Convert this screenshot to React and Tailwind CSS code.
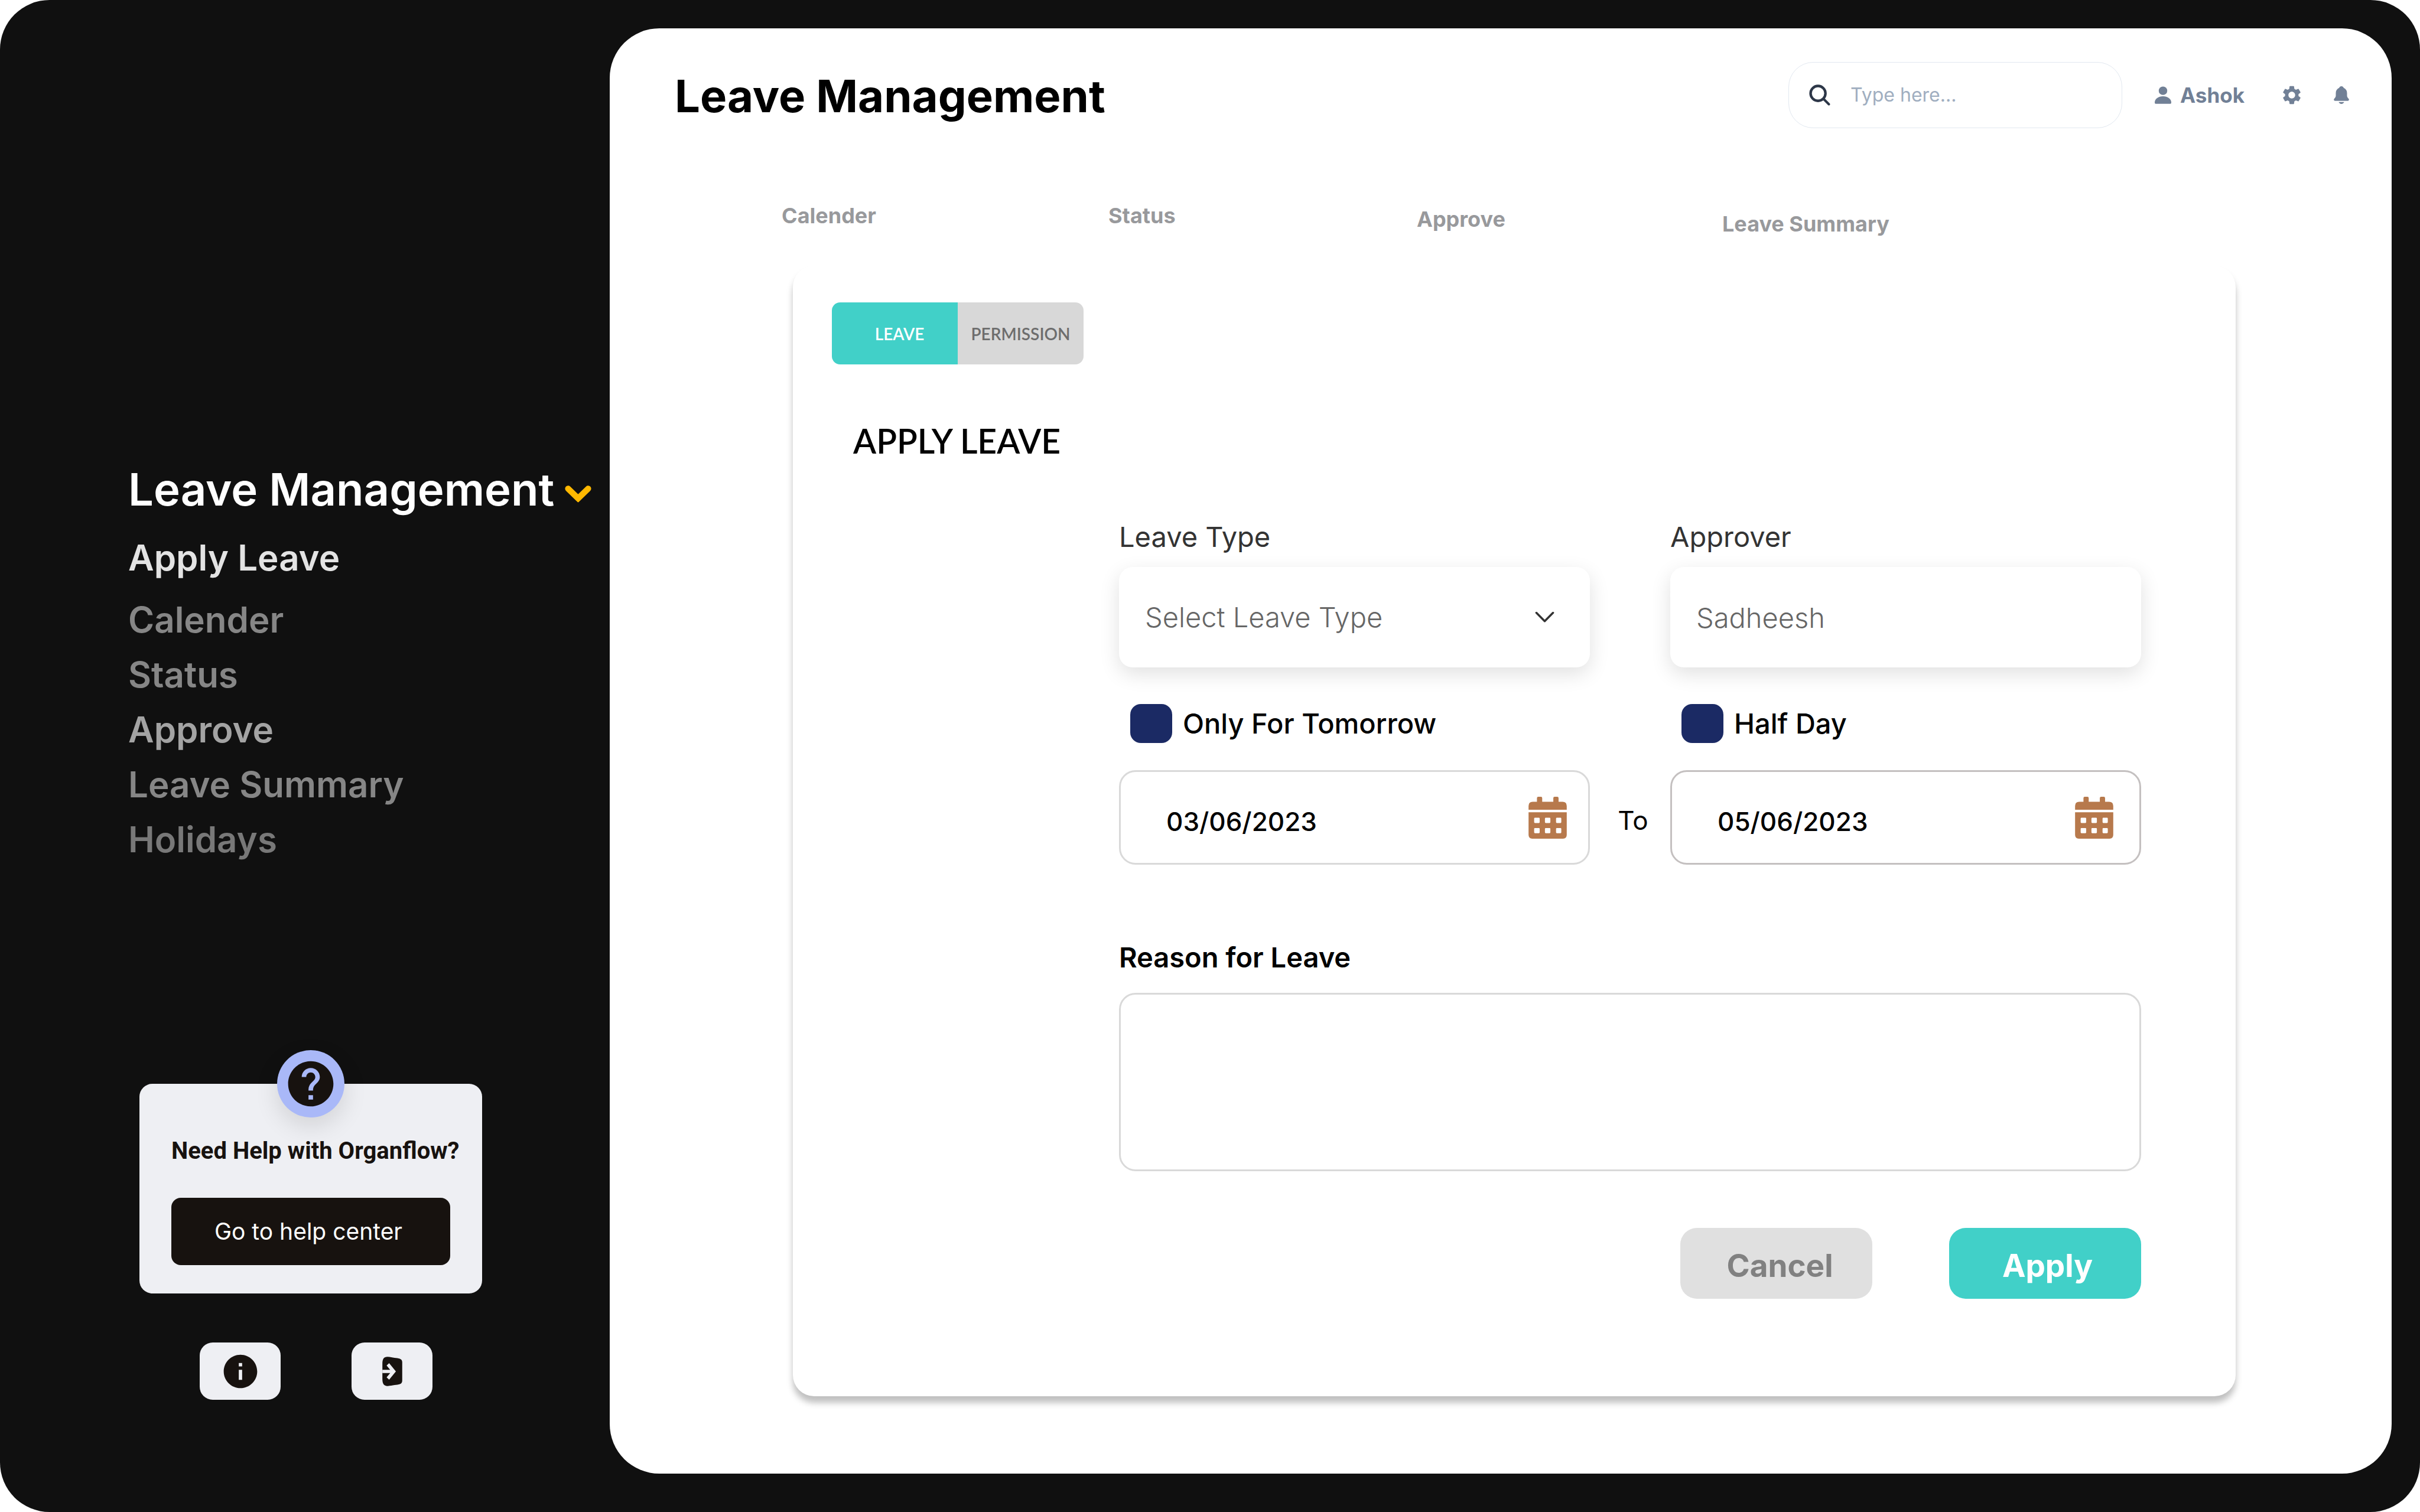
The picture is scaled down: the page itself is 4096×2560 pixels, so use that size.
import React, { useState } from "react";
import { MdHelp, MdInfo, MdSettings } from "react-icons/md";

const NAV = [
  { label: "Calender", tone: "text-[#868686]" },
  { label: "Status", tone: "text-[#868686]" },
  { label: "Approve", tone: "text-[#a3a3a3]" },
  { label: "Leave Summary", tone: "text-[#868686]" },
  { label: "Holidays", tone: "text-[#787878]" },
];

const TABS = [
  { label: "Calender", drop: "pt-0" },
  { label: "Status", drop: "pt-0" },
  { label: "Approve", drop: "pt-1.5" },
  { label: "Leave Summary", drop: "pt-3.5" },
];

function ChevronBold() {
  return (
    <svg viewBox="0 0 63 41" className="h-[29px] w-[45px] shrink-0" fill="none" aria-hidden="true">
      <path d="M7.500 7.500 31.500 31l24-23.500" stroke="#ffb800" strokeWidth="14.500" strokeLinecap="round" strokeLinejoin="bevel" />
      <path d="m26 35.500 4 4q1.500 1.300 3 0l4-4z" fill="#ffb800" />
    </svg>
  );
}

function ChevronThin() {
  return (
    <svg viewBox="0 0 46 27" className="pointer-events-none absolute right-[60px] top-1/2 h-[19px] w-[33px] -translate-y-1/2" fill="none" aria-hidden="true">
      <path d="M3 3l20 20L43 3" stroke="#333" strokeWidth="5" strokeLinecap="round" strokeLinejoin="round" />
    </svg>
  );
}

function SearchIcon() {
  return (
    <svg viewBox="0 0 50 50" className="size-9 shrink-0" fill="none" stroke="#2d3748" aria-hidden="true">
      <circle cx="21" cy="21" r="17.500" strokeWidth="6" />
      <path d="M34 34l12.500 12.500" strokeWidth="5.500" strokeLinecap="round" />
    </svg>
  );
}

function UserIcon() {
  return (
    <svg viewBox="0 0 40 42" className="h-[30px] w-7" fill="currentColor" aria-hidden="true">
      <circle cx="20" cy="10.500" r="10.300" />
      <path d="M0 39c0-9 9-15 20-15s20 6 20 15c0 2-.8 3-2 3H2c-1.200 0-2-1-2-3z" />
    </svg>
  );
}

function BellIcon() {
  return (
    <svg viewBox="0 0 36 42" className="h-[30px] w-[26px]" fill="currentColor" aria-hidden="true">
      <path d="M18 0c2.600 0 4.600 1.600 5.400 4C28.500 6.200 31.300 10.500 31.300 16v6c0 3 1.300 4.800 3.600 7.300 2 2.400 1 5.200-1.700 5.200H2.800c-2.700 0-3.700-2.800-1.700-5.200C3.400 26.800 4.700 25 4.700 22v-6c0-5.500 2.800-9.800 7.900-12C13.400 1.600 15.400 0 18 0z" />
      <path d="M11.500 37.500h13c-1 2.800-3.600 4.500-6.500 4.500s-5.500-1.700-6.500-4.500z" />
    </svg>
  );
}

function DoorIcon() {
  return (
    <svg viewBox="0 0 47 70" className="h-[50px] w-[34px]" aria-hidden="true">
      <path d="M0 17C0 5 4 0 13 .500c6 .3 10 1.500 16 2.300C38 4 47 4 47 13v44c0 9-9 9-18 10.200-6 .8-10 2-16 2.300C4 70 0 65 0 53z" fill="#17120f" />
      <path d="M0 31h18.500L10 21l6-5.500L32 35 16 54.500 10 49l8.500-10H0z" fill="#eeeff3" />
    </svg>
  );
}

function CalendarIcon() {
  return (
    <svg viewBox="0 0 91 100" className="h-[71px] w-[65px]" fill="#b7794c" aria-hidden="true">
      <path d="M0 31V22q0-10 10-10h10V3q0-3 3-3h6.500q3 0 3 3v9H59V3q0-3 3-3h6.500q3 0 3 3v9H81q10 0 10 10v9z" />
      <path
        fillRule="evenodd"
        d="M0 37h91v54q0 9-9 9H9q-9 0-9-9zM15.300 50q-2 0-2 2v8.500q0 2 2 2h9.200q2 0 2-2V52q0-2-2-2zM41 50q-2 0-2 2v8.500q0 2 2 2h9q2 0 2-2V52q0-2-2-2zM67.500 50q-2 0-2 2v8.500q0 2 2 2H76q2 0 2-2V52q0-2-2-2zM15.300 74.500q-2 0-2 2V85q0 2 2 2h9.200q2 0 2-2v-8.500q0-2-2-2zM41 74.500q-2 0-2 2V85q0 2 2 2h9q2 0 2-2v-8.500q0-2-2-2zM67.500 74.500q-2 0-2 2V85q0 2 2 2H76q2 0 2-2v-8.500q0-2-2-2z"
      />
    </svg>
  );
}

function Sidebar() {
  return (
    <aside className="flex w-[1032px] shrink-0 flex-col justify-between pb-[190px] pt-[782px]">
      <nav className="pl-[217px] font-semibold" aria-label="Sections">
        <button type="button" className="flex items-center gap-[18px] whitespace-nowrap text-[76px] leading-[92px] text-white">
          Leave Management
          <span className="pt-4">
            <ChevronBold />
          </span>
        </button>
        <a href="#apply" className="mb-3 mt-6 block text-[60px] leading-[93px] text-[#e3e3e3]">
          Apply Leave
        </a>
        <ul>
          {NAV.map((n) => (
            <li key={n.label}>
              <a href="#section" className={`block text-[60px] leading-[93px] ${n.tone}`}>
                {n.label}
              </a>
            </li>
          ))}
        </ul>
      </nav>

      <div>
        <section className="relative ml-[236px] w-[580px] rounded-[22px] bg-[#eeeff3] px-[54px] pb-12 pt-[90px]">
          <div className="absolute left-1/2 top-0 flex size-[114px] -translate-x-1/2 -translate-y-1/2 items-center justify-center rounded-full bg-[#a9b8f8] shadow-[0_14px_40px_rgba(0,0,0,0.12)]">
            <MdHelp className="size-[92px] shrink-0 text-[#17120f]" />
          </div>
          <h2 className="whitespace-nowrap font-['Roboto',sans-serif] text-[40px] font-bold leading-[48px] text-[#17120f]">
            Need Help with Organflow?
          </h2>
          <button type="button" className="mt-[55px] h-[114px] w-full rounded-2xl bg-[#17120f] pr-2 text-[39px] text-white">
            Go to help center
          </button>
        </section>
        <div className="ml-[338px] mt-[83px] flex gap-[120px]">
          <button type="button" aria-label="Information" className="flex h-[97px] w-[137px] items-center justify-center rounded-[22px] bg-[#eeeff3]">
            <MdInfo className="size-[68px] text-[#17120f]" />
          </button>
          <button type="button" aria-label="Log out" className="flex h-[97px] w-[137px] items-center justify-center rounded-[22px] bg-[#eeeff3]">
            <DoorIcon />
          </button>
        </div>
      </div>
    </aside>
  );
}

function Header() {
  return (
    <header className="flex items-center pl-[110px] pr-[72px]">
      <h1 className="flex-1 pt-0.5 text-[76px] font-bold leading-[92px] text-black">Leave Management</h1>
      <label className="flex h-28 w-[565px] items-center gap-[34px] rounded-[42px] border border-[#e2e8f0] pl-[34px]">
        <SearchIcon />
        <input type="search" aria-label="Search" placeholder="Type here..." className="min-w-0 flex-1 bg-transparent text-[32px] outline-none placeholder:text-[#a0aec0]" />
      </label>
      <button type="button" className="ml-[55px] flex items-center gap-[15px] text-[35px] font-bold text-[#718096]">
        <UserIcon />
        Ashok
      </button>
      <button type="button" aria-label="Settings" className="ml-[61px] text-[#718096]">
        <MdSettings className="size-[38px]" />
      </button>
      <button type="button" aria-label="Notifications" className="ml-[52px] text-[#718096]">
        <BellIcon />
      </button>
    </header>
  );
}

function DateField({ id, label, value, onChange, tone }) {
  return (
    <div className={`flex h-40 min-w-0 items-center rounded-[28px] border-3 pl-[77px] ${tone}`}>
      <input
        id={id}
        type="text"
        aria-label={label}
        value={value}
        onChange={(e) => onChange(e.target.value)}
        className="w-0 min-w-0 flex-1 bg-transparent pt-3.5 text-[44px] font-medium text-black outline-none"
      />
      <button type="button" className="shrink-0" aria-label={`Open calendar, ${label}`}>
        <CalendarIcon />
      </button>
    </div>
  );
}

function CheckField({ id, label }) {
  return (
    <div className="flex items-center gap-[18px] pl-[19px]">
      <input id={id} type="checkbox" defaultChecked className="h-[66px] w-[71px] appearance-none rounded-[18px] bg-[#1b2a64]" />
      <label htmlFor={id} className="text-[47px] font-medium leading-[56px] text-black">
        {label}
      </label>
    </div>
  );
}

function LeaveForm() {
  const [from, setFrom] = useState("03/06/2023");
  const [to, setTo] = useState("05/06/2023");
  return (
    <form className="ml-[552px] mr-40 mt-[99px]" onSubmit={(e) => e.preventDefault()}>
      <div className="grid grid-cols-[1fr_136px_1fr]">
        <div>
          <label htmlFor="leave-type" className="block text-[47px] leading-[56px] text-[#333]">
            Leave Type
          </label>
          <div className="relative mt-[23px]">
            <select id="leave-type" className="h-[170px] w-full appearance-none rounded-[23px] bg-white pl-11 text-[47px] font-light text-[#666] shadow-[0_11px_34px_rgba(0,0,0,0.12)]">
              <option>Select Leave Type</option>
            </select>
            <ChevronThin />
          </div>
        </div>
        <div className="col-start-3">
          <label htmlFor="approver" className="block text-[47px] leading-[56px] text-[#333]">
            Approver
          </label>
          <input
            id="approver"
            type="text"
            defaultValue="Sadheesh"
            className="mt-[23px] h-[170px] w-full rounded-[23px] bg-white pl-11 text-[47px] font-light text-[#666] shadow-[0_11px_34px_rgba(0,0,0,0.12)] outline-none"
          />
        </div>
      </div>

      <div className="mt-[62px] grid grid-cols-[1fr_136px_1fr]">
        <CheckField id="only-tomorrow" label="Only For Tomorrow" />
        <span />
        <CheckField id="half-day" label="Half Day" />
      </div>

      <div className="mt-[46px] grid grid-cols-[1fr_136px_1fr] items-center">
        <DateField id="from" label="From date" value={from} onChange={setFrom} tone="border-[#d9d9d9] pr-9" />
        <span className="pl-2.5 pt-2.5 text-center text-[44px] text-black">To</span>
        <DateField id="to" label="To date" value={to} onChange={setTo} tone="border-[#c4c0c0] pr-11" />
      </div>

      <label htmlFor="reason" className="mt-[129px] block text-[47px] font-semibold leading-[56px] text-black">
        Reason for Leave
      </label>
      <textarea id="reason" className="mt-8 block h-[302px] w-full resize-none rounded-[28px] border-3 border-[#d9d9d9] p-10 text-[44px] outline-none" />

      <div className="mt-24 flex justify-end gap-[130px] text-[53px] font-bold">
        <button type="button" className="h-[120px] w-[325px] rounded-[28px] bg-[#e0e0e0] pl-3 pt-2.5 text-[#818181]">
          Cancel
        </button>
        <button type="submit" className="h-[120px] w-[325px] rounded-[28px] bg-[#41d0c8] pl-2 pt-2.5 text-white">
          Apply
        </button>
      </div>
    </form>
  );
}

export default function App() {
  return (
    <div className="min-h-screen bg-white font-['Inter',sans-serif]">
      <div className="flex min-h-screen rounded-[84px] bg-[#101010]">
        <Sidebar />
        <main className="mb-[65px] mr-12 mt-12 min-w-0 flex-1 rounded-[84px] bg-white pt-[57px]">
          <Header />
          <nav className="mt-[124px] grid grid-cols-[553fr_522fr_517fr_1133fr] pl-[291px] text-[36px] font-bold leading-[48px] text-[#98999c]" aria-label="Leave">
            {TABS.map((t) => (
              <a key={t.label} href="#tab" className={`whitespace-nowrap ${t.drop}`}>
                {t.label}
              </a>
            ))}
          </nav>
          <section className="mb-[131px] ml-[310px] mr-[264px] mt-[47px] rounded-[36px] bg-white pb-[165px] pt-[62px] shadow-[0_11px_11px_rgba(0,0,0,0.25)]">
            <div className="ml-[66px] flex font-['Lato',sans-serif] text-[28px] font-semibold">
              <button type="button" aria-pressed="true" className="h-[105px] w-[213px] rounded-l-[14px] bg-[#41d0c8] pl-4 text-white">
                LEAVE
              </button>
              <button type="button" aria-pressed="false" className="h-[105px] w-[213px] rounded-r-[14px] bg-[#d8d8d8] text-[#6d6d6d]">
                PERMISSION
              </button>
            </div>
            <h2 className="ml-[102px] mt-[93px] font-['Lato',sans-serif] text-[57px] font-semibold leading-[72px] text-black">
              APPLY LEAVE
            </h2>
            <LeaveForm />
          </section>
        </main>
      </div>
    </div>
  );
}
